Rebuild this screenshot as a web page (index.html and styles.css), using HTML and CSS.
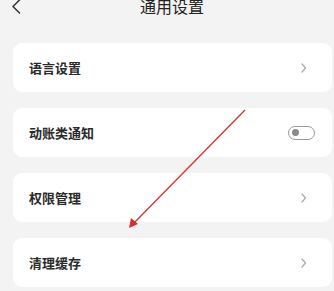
FILE: index.html
```html
<!DOCTYPE html>
<html lang="zh">
<head>
    <meta charset="UTF-8">
    <meta name="viewport" content="width=device-width, initial-scale=1.0">
    <title>通用设置</title>
    <link rel="stylesheet" href="styles.css">
</head>
<body>
    <div class="page">
        <div class="header">
            <svg class="back" width="12" height="16" viewBox="0 0 12 16">
                <path d="M9.5 0 L3 6.5 L9.5 13" fill="none" stroke="#333" stroke-width="1.5" stroke-linecap="round" stroke-linejoin="round"/>
            </svg>
            <div class="title">通用设置</div>
        </div>
        <div class="list">
            <div class="card">
                <span class="label">语言设置</span>
                <svg class="chev" width="8" height="10" viewBox="0 0 8 10">
                    <path d="M2 1 L5.5 5 L2 9" fill="none" stroke="#aaa" stroke-width="1.2" stroke-linecap="round" stroke-linejoin="round"/>
                </svg>
            </div>
            <div class="card">
                <span class="label">动账类通知</span>
                <div class="switch"><div class="knob"></div></div>
            </div>
            <div class="card">
                <span class="label">权限管理</span>
                <svg class="chev" width="8" height="10" viewBox="0 0 8 10">
                    <path d="M2 1 L5.5 5 L2 9" fill="none" stroke="#aaa" stroke-width="1.2" stroke-linecap="round" stroke-linejoin="round"/>
                </svg>
            </div>
            <div class="card">
                <span class="label">清理缓存</span>
                <svg class="chev" width="8" height="10" viewBox="0 0 8 10">
                    <path d="M2 1 L5.5 5 L2 9" fill="none" stroke="#aaa" stroke-width="1.2" stroke-linecap="round" stroke-linejoin="round"/>
                </svg>
            </div>
        </div>
        <!-- red annotation arrow -->
        <svg class="arrow" width="334" height="291" viewBox="0 0 334 291">
            <line x1="245" y1="110" x2="133" y2="224" stroke="#d93030" stroke-width="1.3"/>
            <path d="M129 228 L131 218 L138 224 Z" fill="#d93030"/>
        </svg>
    </div>
</body>
</html>
```

FILE: styles.css
```css
body{
    margin: 0;
    background-color: #f3f3f3;
    font-family: "Noto Sans CJK SC", "Noto Sans", sans-serif;
    color: #222;
}
.page{
    position: relative;
    width: 334px;
    height: 291px;
    overflow: hidden;
}
.header{
    position: relative;
    height: 14px;
    display: flex;
    align-items: center;
    justify-content: center;
    padding-left: 10px;
}
.back{
    position: absolute;
    left: 10px;
    top: 0;
}
.title{
    font-size: 16px;
    line-height: 14px;
    margin-top: -3px;
    color: #222;
}
.list{
    display: flex;
    flex-direction: column;
    gap: 16px;
    padding: 29px 2px 0 13px;
}
.card{
    height: 49px;
    background-color: #fff;
    border-radius: 9px;
    display: flex;
    align-items: center;
    justify-content: space-between;
    padding: 0 24px 0 16px;
}
.label{
    font-size: 13px;
    font-weight: 700;
    color: #2a2a2a;
}
.switch{
    box-sizing: border-box;
    width: 27px;
    height: 14px;
    border: 1.5px solid #9a9a9a;
    border-radius: 8px;
    display: flex;
    align-items: center;
    padding-left: 3px;
    margin-right: -7px;
}
.knob{
    width: 7px;
    height: 7px;
    border-radius: 50%;
    background-color: #8a8a8a;
}
.arrow{
    position: absolute;
    left: 0;
    top: 0;
}
```
